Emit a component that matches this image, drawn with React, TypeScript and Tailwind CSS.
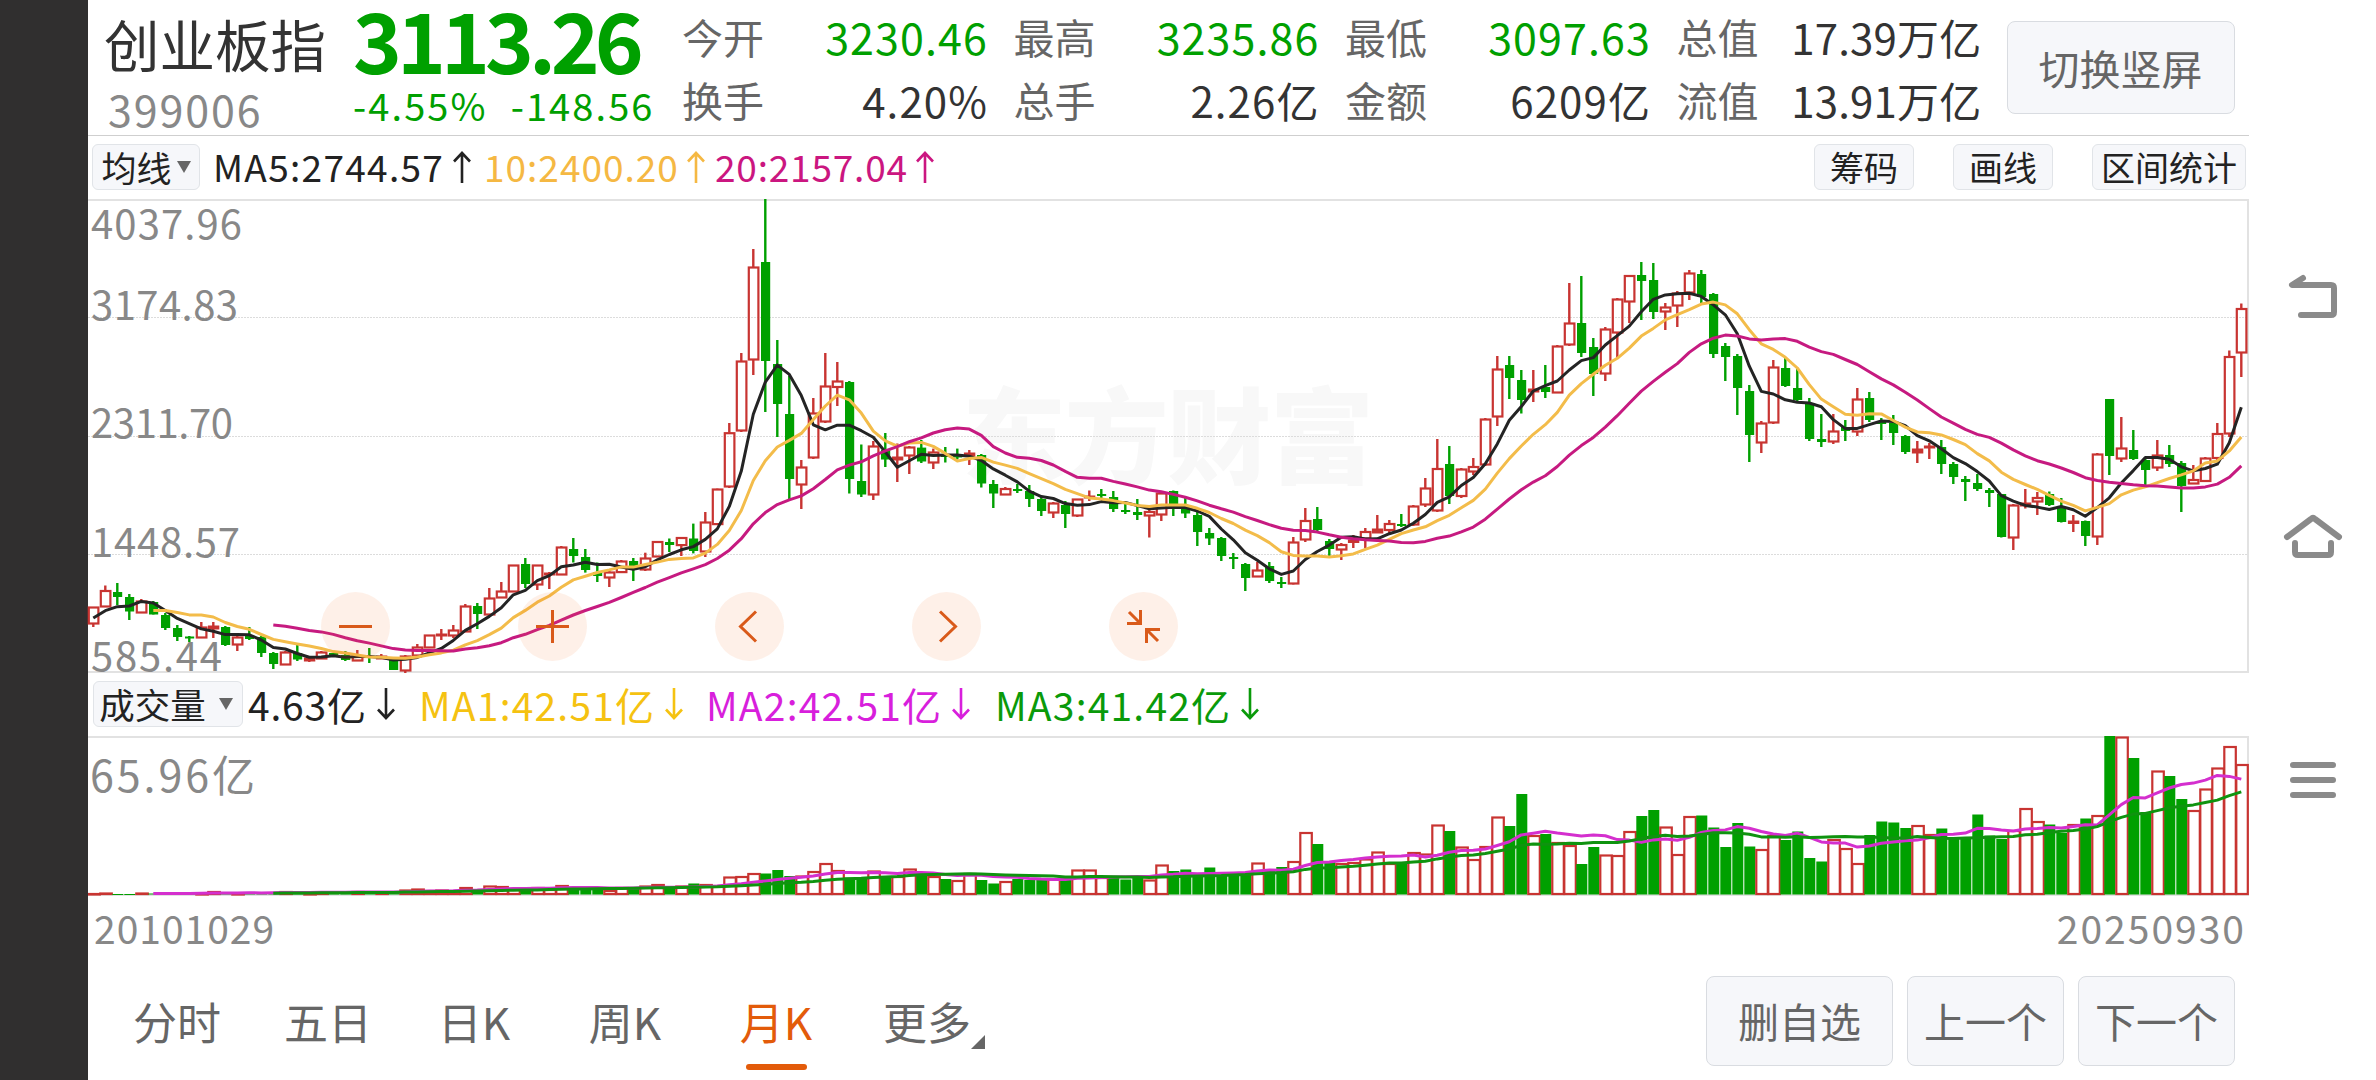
import { useState } from 'react'
import type { ReactNode } from 'react'

// [up, high, body top, body bottom, low, volume top], in chart pixels
type Bar = [number, number, number, number, number, number]

const BARS: Bar[] = [
  [1, 607, 607, 624, 627, 893], [1, 585.5, 590.5, 607, 607, 892.5], [0, 583, 592, 597, 605, 894], [0, 594, 597, 611.5, 620, 894],
  [1, 599, 601, 613, 613, 892.5], [0, 601, 602, 614.5, 614.5, 893.5], [0, 613, 615, 628, 630, 893.5], [0, 625, 628, 637, 641, 893.5],
  [0, 636, 636.5, 638, 642, 893.5], [1, 622, 627, 638, 638, 893], [1, 622, 626, 629, 638, 891], [0, 626, 627, 645, 646, 892.5],
  [1, 635, 637, 645, 651, 893], [0, 627, 636, 639, 640, 892], [0, 636, 637, 653, 657, 893], [0, 652, 653, 664, 669, 893],
  [1, 651, 652, 665, 665, 891], [0, 645, 653, 659.5, 661, 892], [1, 656, 658, 661, 662, 893], [1, 651, 652, 659, 659, 891.5],
  [0, 653, 653, 657, 657, 892], [0, 651, 655, 660, 661, 892.5], [1, 650, 656, 661, 661, 891], [0, 648, 656, 658, 663, 892],
  [1, 654, 656, 659, 659, 892], [0, 659, 660, 670, 670, 892], [1, 655, 656, 671, 673, 889.5], [1, 644, 647, 656, 656, 888.5],
  [1, 635, 635, 648, 648, 890], [1, 629, 634, 636, 640, 889.5], [1, 625, 630, 636, 638, 890.5], [1, 604, 606, 632, 632, 887],
  [0, 603, 606, 614, 629, 890], [1, 588, 598, 615, 615, 885.5], [1, 582, 591, 598, 598, 886], [1, 565, 565, 592, 592, 888],
  [0, 558, 564, 584, 588, 889.5], [1, 565, 565, 585, 590, 887], [1, 572, 573, 575, 589, 889], [1, 546, 547, 575, 575, 885],
  [0, 538, 549, 556, 562.5, 888], [0, 549, 557, 570, 572.6, 888], [0, 562.5, 572, 576, 582, 888], [1, 570, 572, 578, 587, 890],
  [1, 560, 561, 572.6, 573, 887], [0, 558, 561, 567, 581, 888], [1, 552.7, 558, 570, 571, 885.5], [1, 541.5, 541.5, 557, 557, 884],
  [0, 538.5, 542, 545, 552, 889], [1, 537, 537.5, 545.6, 556, 885.5], [0, 523.6, 538.5, 551, 553.4, 883.5], [1, 512, 522, 552, 557, 884],
  [1, 488.6, 489, 524.6, 525, 885], [1, 423, 432.7, 487, 488, 876.5], [1, 353, 361, 431, 432, 876], [1, 249, 267, 360, 375, 873],
  [0, 199, 262, 361, 412, 873.5], [0, 340, 364, 404, 437, 870], [0, 376, 414, 479, 499, 876], [1, 460, 467, 485, 509, 875.5],
  [1, 398, 413, 458, 459, 871], [1, 353, 386, 422, 423, 863], [1, 362, 381, 387.5, 406, 870], [0, 381, 382, 479, 493.5, 877.5],
  [0, 444.5, 481, 494.5, 497, 878], [1, 441, 446, 495, 500, 870.5], [0, 433, 450, 459.5, 467, 876], [1, 443.5, 457, 460, 482, 876],
  [1, 446, 447, 456, 474, 868.5], [0, 440, 447.6, 461.5, 463, 873], [1, 448.6, 452, 463, 469, 876], [0, 447, 454, 457, 462.5, 879],
  [0, 448.6, 454.5, 457.5, 459.5, 880], [1, 450, 453, 456, 465, 873], [0, 454, 455, 483.5, 487.5, 880], [0, 480, 484, 493.5, 508, 883.5],
  [1, 487, 488.5, 495, 495, 881], [0, 484, 489, 491, 493, 879], [0, 485, 491, 499, 507, 880], [0, 497, 499, 511, 516, 879.5],
  [1, 502, 503, 513, 518, 878.5], [0, 501, 505, 514, 528, 879], [1, 499, 499, 516, 517, 869.5], [1, 490.5, 496, 498, 501, 869.5],
  [0, 489, 494, 496, 498, 877], [0, 491, 497, 509, 512, 876], [0, 503, 510, 512, 514, 879.5], [0, 499, 512, 515, 520, 877],
  [1, 510, 511.5, 516, 537.5, 879.5], [1, 492, 493, 515, 521, 864.5], [0, 490.5, 491, 505, 516, 871], [0, 498, 505, 513.5, 518, 869.5],
  [0, 512, 515, 532, 546, 873.5], [0, 528, 533, 538.5, 545, 867.5], [0, 537, 538, 556, 561, 875], [0, 553, 557, 559, 569, 873.5],
  [0, 563, 564, 578, 591, 873.5], [1, 562, 570, 577, 577, 862.5], [0, 562, 566, 581, 583, 869], [0, 577, 582, 584, 588, 867],
  [1, 537, 542, 584, 584.5, 861], [1, 508, 520.5, 540, 542, 832], [0, 507, 519, 530, 532, 844], [0, 539, 541, 549, 556, 861],
  [1, 543, 544.5, 550, 560, 863], [1, 535, 540, 542.5, 548, 862], [1, 528, 531.5, 539, 548, 858.5], [1, 515, 529, 533, 533, 851.5],
  [1, 520, 523.5, 530.5, 534, 863], [0, 514, 524, 526, 527, 863], [1, 505, 506, 525, 526, 852], [1, 478, 488, 505, 507, 853.5],
  [1, 439, 468.5, 511, 512, 824.5], [0, 446, 464, 496, 504, 831], [1, 468, 469, 496.5, 498, 846.5], [1, 458, 466.5, 472, 475, 859],
  [1, 418, 419, 465, 466, 846], [1, 356, 369, 417, 426, 816.5], [0, 356, 365, 378, 399, 826], [0, 370, 380, 400, 413.5, 794],
  [1, 370, 389, 392, 402, 835], [0, 365, 387, 392, 398, 834], [1, 345, 346, 393, 393, 842], [1, 283, 323, 345, 346, 845],
  [0, 276, 323, 353, 357, 864], [0, 338, 347, 374, 396, 847], [1, 327, 329, 374, 381, 854.5], [1, 298, 299, 333, 359, 855],
  [1, 275, 275.5, 302, 323, 831], [0, 262, 275, 281, 320, 816], [0, 263, 280, 312, 319, 810], [1, 303, 307, 312, 330, 826.5],
  [1, 291, 293, 306, 327, 854], [1, 270, 273, 293, 300, 816], [0, 270, 274, 297, 303, 815.5], [0, 293, 294, 354, 358, 827.5],
  [0, 343, 346, 357, 381, 847], [0, 354, 356, 388, 415, 823], [0, 385, 391, 435, 462, 846.5], [1, 421, 423, 443, 453, 849],
  [1, 360, 367, 423, 424, 835], [0, 358, 368, 386, 387, 840], [0, 368, 388, 400, 402, 831.5], [0, 398, 403, 439, 441, 858],
  [0, 414, 439, 442, 447, 861.5], [1, 414, 431, 442, 444, 839], [0, 420, 427, 431, 441, 848], [1, 388, 399, 432, 436, 863],
  [0, 392, 398, 420, 422, 835], [0, 418, 421, 424, 440, 821.5], [0, 415, 423, 433, 445, 822.5], [0, 435, 436, 452, 454, 828],
  [1, 441, 449, 453, 463, 825], [1, 443, 446, 448, 459, 834], [0, 440, 447, 464, 474, 828.5], [0, 462, 464, 477, 484, 837],
  [0, 476, 479, 482, 501, 837], [0, 474, 483, 489, 491, 814.5], [0, 488, 490, 493, 507, 835.5], [0, 494, 494, 537, 537.5, 839],
  [1, 504, 505, 538, 550, 830], [1, 489, 503, 506, 508.5, 808], [1, 492, 497.5, 502, 515, 821], [0, 491.5, 494, 505, 506, 824.5],
  [0, 498, 507.5, 522, 522.5, 833], [1, 515, 521, 523.5, 532, 824], [0, 520.5, 521, 536, 546, 818.5], [1, 453, 454, 537, 545, 815],
  [0, 399, 399, 456, 475, 736], [1, 417, 448, 459, 462, 736.5], [0, 430, 450, 459, 460, 758], [0, 458, 460, 470, 485, 812],
  [1, 440, 455, 468, 471, 770.5], [0, 445, 455, 464, 467, 776], [0, 461, 463, 486, 512, 799], [1, 465, 479.5, 484, 484, 810],
  [1, 457, 458, 481.5, 482, 788.5], [1, 423, 433.5, 458.5, 460, 767.5], [1, 350.5, 356.5, 434, 437, 746], [1, 303.5, 308.5, 353, 377, 764],
]

// Months that opened above the close but still gained on the previous month
const VOLUME_UP = new Set([72, 84, 146])

// Closes of the four months before the first visible bar
const SEED_CLOSES = [627, 617, 615, 624]
const SEED_VOLUMES = [894, 894, 894, 894]

const RED = '#c83431'
const GREEN = '#00a000'
const VOLUME_BASE = 894.5

const barX = (i: number) => 93.3 + i * 12

function averageLine(values: number[], period: number) {
  const points: string[] = []
  for (let i = period - 1; i < values.length; i++) {
    const sum = values.slice(i - period + 1, i + 1).reduce((a, b) => a + b, 0)
    points.push(`${barX(i - 4).toFixed(1)},${(sum / period).toFixed(1)}`)
  }
  return points.join(' ')
}

const closes = [...SEED_CLOSES, ...BARS.map(([up, , top, bottom]) => (up ? top : bottom))]
const volumes = [...SEED_VOLUMES, ...BARS.map((bar) => bar[5])]

const PRICE_LABELS = [
  { text: '4037.96', y: 239, width: 151 },
  { text: '3174.83', y: 320, width: 147 },
  { text: '2311.70', y: 438, width: 142 },
  { text: '1448.57', y: 557, width: 149 },
  { text: '585.44', y: 671, width: 131 },
]

const QUOTES = [
  [{ label: '今开', value: '3230.46', green: true }, { label: '换手', value: '4.20%', green: false }],
  [{ label: '最高', value: '3235.86', green: true }, { label: '总手', value: '2.26亿', green: false }],
  [{ label: '最低', value: '3097.63', green: true }, { label: '金额', value: '6209亿', green: false }],
  [{ label: '总值', value: '17.39万亿', green: false }, { label: '流值', value: '13.91万亿', green: false }],
]

const TABS = [
  { name: '分时', className: 'w-[90px]' },
  { name: '五日', className: 'ml-[61px] w-[90px]' },
  { name: '日K', className: 'ml-16 w-[74px]' },
  { name: '周K', className: 'ml-[77px] w-[74px]' },
  { name: '月K', className: 'ml-[77px] w-[74px]' },
]

const CONTROLS = [
  { name: 'zoom out', path: 'M18 34.5H51' },
  { name: 'zoom in', path: 'M18 34.5H51M34.5 18V51' },
  { name: 'previous', path: 'M41 19.5L25.5 34.5L41 49.5' },
  { name: 'next', path: 'M28 19.5L43.5 34.5L28 49.5' },
  { name: 'shrink', path: 'M20 20L31 31M31.5 18V31.5H18M49 49L38 38M37.5 51V37.5H51' },
]

function Arrow({ down = false }: { down?: boolean }) {
  return (
    <svg className={down ? 'h-[34px] w-5 rotate-180' : 'h-[34px] w-5'} viewBox="0 0 20 34" fill="none" stroke="currentColor" strokeWidth="2.6">
      <path d="M10 33V3M2 11.5L10 3L18 11.5" />
    </svg>
  )
}

function Triangle() {
  return (
    <svg className="h-3 w-3.5" viewBox="0 0 14 12" fill="#666">
      <path d="M0 0H14L7 12Z" />
    </svg>
  )
}

function SmallButton({ children, className }: { children: ReactNode; className: string }) {
  return (
    <button className={`flex h-[46px] items-center justify-center whitespace-nowrap rounded-md border-[1.5px] border-[#e1e4e8] bg-[#f6f7fa] text-[#222] ${className}`}>
      {children}
    </button>
  )
}

function BigButton({ children, className }: { children: ReactNode; className: string }) {
  return (
    <button className={`flex items-center justify-center rounded-lg border-[1.5px] border-[#d9dce1] bg-[#f6f7fa] text-[41px] text-[#666] ${className}`}>
      {children}
    </button>
  )
}

function Header() {
  return (
    <header className="flex h-[136px] border-b border-[#cfcfcf] pl-[16px]">
      <div className="w-[249px]">
        <div className="h-[90px] whitespace-nowrap text-[55.5px] leading-[86px] text-[#333]">创业板指</div>
        <div className="pl-1 text-[43px] leading-[36px] tracking-[1.9px] text-[#888]">399006</div>
      </div>
      <div className="w-[329px] text-[#00a000]">
        <div className="h-[88px] text-[83px] font-bold leading-[76px] tracking-[-5px]">3113.26</div>
        <div className="flex gap-[23px] whitespace-nowrap text-[38px] leading-[34px] tracking-[2.1px]">
          <span>-4.55%</span>
          <span>-148.56</span>
        </div>
      </div>
      <div className="flex gap-[26.5px]">
        {QUOTES.map((column) => (
          <div key={column[0].label} className="w-[305px] pt-[5px]">
            {column.map(({ label, value, green }) => (
              <div key={label} className="flex h-[63px] items-center justify-between whitespace-nowrap">
                <span className="text-[41px] text-[#666]">{label}</span>
                <span className={green ? '-mr-px text-[43px] tracking-[1.1px] text-[#00a000]' : value.length > 6 ? 'text-[42px] tracking-[0.2px] text-[#333]' : '-mr-px text-[42px] tracking-[1.1px] text-[#333]'}>{value}</span>
              </div>
            ))}
          </div>
        ))}
      </div>
      <BigButton className="ml-[25px] mt-[21px] h-[93px] w-[228px]">切换竖屏</BigButton>
    </header>
  )
}

function PriceChart() {
  return (
    <div className="relative h-[473px]">
      <svg className="block overflow-visible" width="2161" height="473" viewBox="88 199 2161 473">
        <text x="962" y="476" fontSize="104" fontWeight="900" fill="#f8f8f8" textLength="412">东方财富</text>
        {[317.5, 436.5, 554.5].map((y) => (
          <line key={y} x1="88" x2="2248" y1={y} y2={y} stroke="#dcdcdc" strokeDasharray="2 1" />
        ))}
        <path d="M88 200H2248V672H88" fill="none" stroke="#e2e2e2" strokeWidth="2" />
        {PRICE_LABELS.map(({ text, y, width }) => (
          <text key={text} x="91" y={y} fontSize="40" fill="#888" textLength={width}>{text}</text>
        ))}
        {BARS.map(([up, high, top, bottom, low], i) => {
          const x = barX(i)
          const height = bottom - top
          if (!up) {
            return (
              <g key={i} fill={GREEN}>
                <rect x={x - 1.2} y={high} width="2.4" height={low - high} />
                <rect x={x - 4.3} y={top} width="9.2" height={Math.max(height, 2)} />
              </g>
            )
          }
          return (
            <g key={i} fill={RED}>
              <rect x={x - 1.2} y={high} width="2.4" height={Math.max(top - high, 0)} />
              <rect x={x - 1.2} y={bottom} width="2.4" height={Math.max(low - bottom, 0)} />
              {height > 4
                ? <rect x={x - 4.5} y={top + 0.5} width="9.6" height={height - 1} fill="none" stroke={RED} strokeWidth="2.2" />
                : <rect x={x - 5.4} y={top - 0.5} width="11.4" height={height + 1} />}
            </g>
          )
        })}
        <g fill="none" strokeWidth="3" strokeLinejoin="round">
          <polyline points={averageLine(closes, 5)} stroke="#242424" />
          <polyline points={averageLine(closes, 10)} stroke="#f3bc4a" />
          <polyline points={averageLine(closes, 20)} stroke="#c61a80" />
        </g>
      </svg>
      <div className="absolute left-[233px] top-[393px] flex gap-32">
        {CONTROLS.map(({ name, path }) => (
          <button key={name} aria-label={name} className="h-[69px] w-[69px] rounded-full bg-[#f56a20]/10">
            <svg viewBox="0 0 69 69" fill="none" stroke="#d95a1a" strokeWidth="3">
              <path d={path} />
            </svg>
          </button>
        ))}
      </div>
    </div>
  )
}

function VolumeChart() {
  return (
    <svg className="block" width="2161" height="160" viewBox="88 736 2161 160">
      <path d="M88 737H2248V895H88" fill="none" stroke="#e2e2e2" strokeWidth="2" />
      <text x="90" y="792" fontSize="43" fill="#888" textLength="165">65.96亿</text>
      {BARS.map((bar, i) => {
        const x = barX(i)
        const top = bar[5]
        const height = Math.max(VOLUME_BASE - top, 1)
        if (!bar[0] && !VOLUME_UP.has(i)) {
          return <rect key={i} x={x - 5} y={top} width="11" height={height} fill={GREEN} />
        }
        return (
          <rect key={i} x={x - 5} y={top + 1} width="11.5" height={Math.max(height - 1.5, 0.5)} fill="none" stroke={RED} strokeWidth="2.2" />
        )
      })}
      <g fill="none" strokeWidth="3" strokeLinejoin="round">
        <polyline points={averageLine(volumes, 10)} stroke="#d42fce" />
        <polyline points={averageLine(volumes, 20)} stroke="#0f930f" />
      </g>
    </svg>
  )
}

function SystemNav() {
  return (
    <nav className="flex flex-1 flex-col items-center pt-[270px]">
      <svg width="60" height="54" viewBox="2283 270 60 54" fill="none" stroke="#8a8a8a" strokeWidth="6" strokeLinecap="round" strokeLinejoin="round">
        <path d="M2303 278L2292 285H2331Q2334 285 2334 288V312Q2334 315 2331 315H2301" />
      </svg>
      <svg className="mt-[185px]" width="60" height="54" viewBox="2283 509 60 54" fill="none" stroke="#8a8a8a" strokeWidth="6" strokeLinecap="round" strokeLinejoin="round">
        <path d="M2287 537L2311 519Q2313 517 2315 519L2339 537M2295 543V552Q2295 555 2298 555H2328Q2331 555 2331 552V543" />
      </svg>
      <svg className="mt-[190px]" width="60" height="54" viewBox="2283 753 60 54" stroke="#8a8a8a" strokeWidth="6" strokeLinecap="round">
        <path d="M2293 765H2333M2293 780H2333M2293 795H2333" />
      </svg>
    </nav>
  )
}

export default function App() {
  const [tab, setTab] = useState('月K')

  return (
    <div className="flex h-[1080px] w-[2376px] overflow-hidden bg-white font-['Noto_Sans_CJK_SC','Noto_Sans',sans-serif]">
      <div className="w-[88px] bg-[#302f2f]" />
      <main className="flex w-[2161px] flex-col">
        <Header />

        <div className="flex h-[63px] items-center pb-0.5 pl-1 pr-[3px] text-[37px] leading-none">
          <SmallButton className="w-[108px] gap-[5px] text-[35px]">均线<Triangle /></SmallButton>
          <div className="ml-[13px] flex w-[271px] items-center gap-2 whitespace-nowrap tracking-[1.3px] text-[#222]">MA5:2744.57<Arrow /></div>
          <div className="flex w-[231px] items-center gap-[7px] whitespace-nowrap tracking-[1px] text-[#f5b843]">10:2400.20<Arrow /></div>
          <div className="flex items-center gap-[7px] whitespace-nowrap tracking-[0.8px] text-[#cb1680]">20:2157.04<Arrow /></div>
          <div className="ml-auto flex gap-[39px] text-[34px]">
            <SmallButton className="w-[100px]">筹码</SmallButton>
            <SmallButton className="w-[100px]">画线</SmallButton>
            <SmallButton className="w-[154px]">区间统计</SmallButton>
          </div>
        </div>

        <PriceChart />

        <div className="flex h-16 items-center pl-[5px] text-[39px] leading-none">
          <SmallButton className="w-[150px] gap-[13px] pr-1 text-[35.5px]">成交量<Triangle /></SmallButton>
          <div className="ml-[5px] flex w-[171px] items-center gap-[9px] whitespace-nowrap tracking-[0.8px] text-[#222]">4.63亿<Arrow down /></div>
          <div className="flex w-[287px] items-center gap-[9px] whitespace-nowrap tracking-[1.2px] text-[#f5c211]">MA1:42.51亿<Arrow down /></div>
          <div className="flex w-[289px] items-center gap-[9px] whitespace-nowrap tracking-[1.2px] text-[#d81fdc]">MA2:42.51亿<Arrow down /></div>
          <div className="flex items-center gap-[9px] whitespace-nowrap tracking-[1.2px] text-[#0a9a0a]">MA3:41.42亿<Arrow down /></div>
        </div>

        <VolumeChart />

        <div className="flex h-[66px] items-center justify-between pb-[3px] pl-1.5 pr-[3px] text-[39px] text-[#888]">
          <span className="tracking-[1px]">20101029</span>
          <span className="tracking-[2px]">20250930</span>
        </div>

        <div className="flex h-[118px] items-center pl-11 pr-[14px] text-[44px] text-[#666]">
          <div className="flex">
            {TABS.map(({ name, className }) => (
              <button
                key={name}
                onClick={() => setTab(name)}
                className={`flex h-[118px] flex-col items-center whitespace-nowrap ${className} ${tab === name ? 'text-[#e35b0a]' : ''}`}
              >
                <span className="mt-[26px] h-[67px] leading-[66px]">{name}</span>
                {tab === name && <span className="mt-[9px] h-1.5 w-[61px] rounded-full bg-[#e35b0a]" />}
              </button>
            ))}
            <button className="ml-[70px] flex h-[118px] items-end whitespace-nowrap">
              <span className="mb-[26px] leading-[66px]">更多</span>
              <svg className="mb-[31px] h-3.5 w-3.5" viewBox="0 0 14 14" fill="#666">
                <path d="M14 0V14H0Z" />
              </svg>
            </button>
          </div>
          <div className="ml-auto flex gap-[14px]">
            <BigButton className="h-[90px] w-[187px]">删自选</BigButton>
            <BigButton className="h-[90px] w-[157px]">上一个</BigButton>
            <BigButton className="h-[90px] w-[157px]">下一个</BigButton>
          </div>
        </div>
      </main>
      <SystemNav />
    </div>
  )
}
